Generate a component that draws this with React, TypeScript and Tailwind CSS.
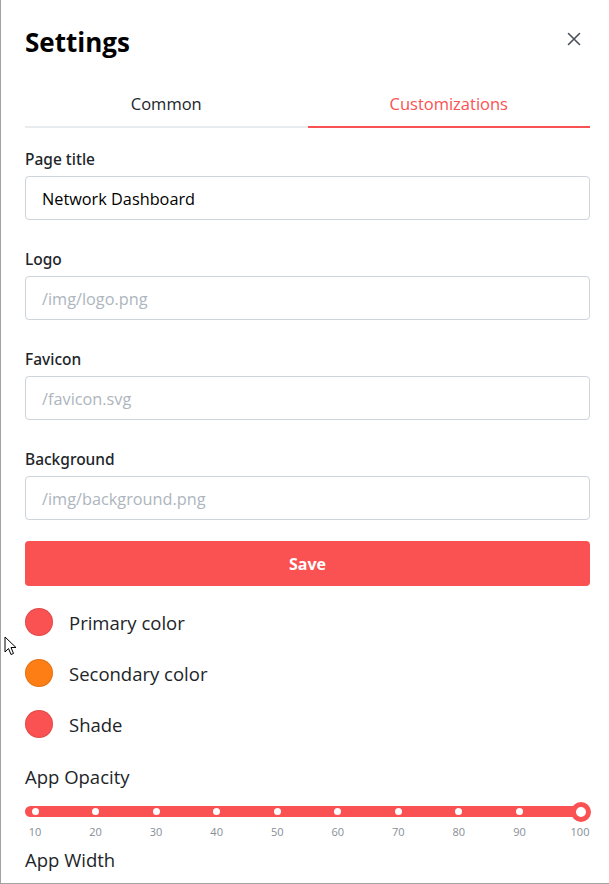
import React from "react";

const font = { fontFamily: '"Open Sans", "Noto Sans", sans-serif' };
const labelFont = { fontFamily: '"Noto Sans", "Open Sans", sans-serif' };

function Field({ label, value, placeholder }: { label: string; value?: string; placeholder?: string }) {
  return (
    <div className="flex flex-col">
      <label className="h-[24px] flex items-center pt-[3px] text-[15.5px] font-medium text-[#212529]" style={labelFont}>{label}</label>
      <input
        readOnly
        value={value ?? ""}
        placeholder={placeholder}
        className="mt-[6px] h-[44px] w-full rounded-[4px] border border-[#ced4da] bg-white px-[16px] pt-[1px] text-[16.3px] text-[#000] placeholder:text-[#adb5bd] outline-none"
        style={font}
      />
    </div>
  );
}

function ColorRow({ color, label }: { color: string; label: string }) {
  return (
    <div className="flex items-center h-[28px]">
      <div className="w-[28px] h-[28px] rounded-full" style={{ background: color, boxShadow: "inset 0 0 0 1px rgba(0,0,0,0.1)" }} />
      <span className="ml-[16px] text-[18.5px] text-[#212529] pt-[1px]">{label}</span>
    </div>
  );
}

export default function App() {
  const ticks = [10, 20, 30, 40, 50, 60, 70, 80, 90, 100];
  return (
    <div
      className="relative w-[609px] h-[884px] overflow-hidden bg-white border-l border-b border-[#a3a3a3] pl-[24px] pr-[19px]"
      style={font}
    >
      {/* header */}
      <div className="flex items-center justify-between h-[32px] mt-[26px]">
        <h1 className="text-[26px] font-bold text-black leading-none">Settings</h1>
        <button className="w-[28px] h-[28px] flex items-center justify-center -mt-[6px] mr-[2px]">
          <svg width="14" height="14" viewBox="0 0 14 14">
            <path d="M1.5 1.5 L12.5 12.5 M12.5 1.5 L1.5 12.5" stroke="#495057" strokeWidth="1.6" strokeLinecap="round" />
          </svg>
        </button>
      </div>

      {/* tabs */}
      <div className="flex mt-[26px]">
        <div className="flex-1 h-[44px] flex items-center justify-center border-b-2 border-[#e9ecef] text-[16.5px] text-[#212529] pb-[1px]">
          Common
        </div>
        <div className="flex-1 h-[44px] flex items-center justify-center border-b-2 border-[#fa5252] text-[16.5px] text-[#fa5252] pb-[1px]">
          Customizations
        </div>
      </div>

      {/* fields */}
      <div className="flex flex-col gap-[26px] mt-[18px]">
        <Field label="Page title" value="Network Dashboard" />
        <Field label="Logo" placeholder="/img/logo.png" />
        <Field label="Favicon" placeholder="/favicon.svg" />
        <Field label="Background" placeholder="/img/background.png" />
      </div>

      <button className="mt-[21px] w-full h-[45px] rounded-[4px] bg-[#fa5252] text-white text-[16px] font-bold flex items-center justify-center">
        Save
      </button>

      <div className="flex flex-col gap-[23px] mt-[22px]">
        <ColorRow color="#fa5252" label="Primary color" />
        <ColorRow color="#fd7e14" label="Secondary color" />
        <ColorRow color="#fa5252" label="Shade" />
      </div>

      <div className="mt-[25px] h-[26px] flex items-center text-[18.5px] text-[#212529] pt-[1px]">App Opacity</div>

      {/* slider */}
      <div className="relative mt-[17px] h-[11px] rounded-full bg-[#fa5252]">
        {ticks.slice(0, 9).map((t, i) => (
          <div
            key={t}
            className="absolute top-1/2 w-[7px] h-[7px] -mt-[3.5px] -ml-[3.5px] rounded-full bg-white"
            style={{ left: `${10 + (i * 545) / 9}px` }}
          />
        ))}
        <div className="absolute right-[-1px] top-1/2 -translate-y-1/2 w-[20px] h-[20px] rounded-full bg-white border-[5px] border-[#fa5252]" />
      </div>
      <div className="relative h-[20px] mt-[5px]">
        {ticks.map((t, i) => (
          <span
            key={t}
            className="absolute top-0 -translate-x-1/2 text-[11px] leading-[20px] text-[#868e96]"
            style={{ left: `${10 + (i * 545) / 9}px` }}
          >
            {t}
          </span>
        ))}
      </div>

      <div className="mt-[5px] h-[26px] flex items-center text-[18.5px] text-[#212529]">App Width</div>

      {/* mouse cursor */}
      <svg className="absolute left-[3px] top-[636px]" width="14" height="21" viewBox="0 0 14 21">
        <path d="M1 1 L1 16 L4.5 12.5 L7 18.5 L9.5 17.5 L7 11.5 L12 11.5 Z" fill="white" stroke="black" strokeWidth="1" strokeLinejoin="round" />
      </svg>
    </div>
  );
}
